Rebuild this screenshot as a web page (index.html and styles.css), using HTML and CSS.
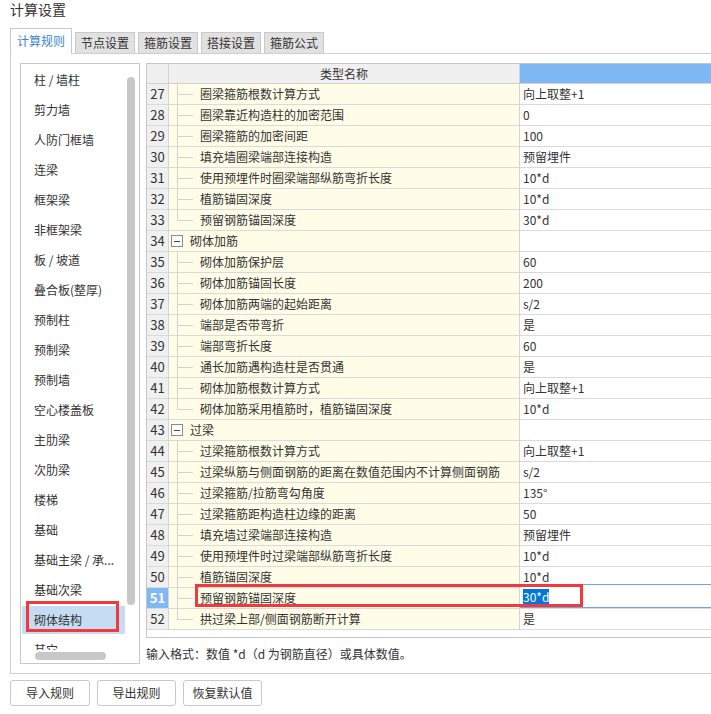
FILE: index.html
```html
<!DOCTYPE html>
<html lang="zh">
<head>
<meta charset="utf-8">
<title>计算设置</title>
<link rel="stylesheet" href="styles.css">
</head>
<body>
<div class="app">
  <div class="title">计算设置</div>
  <div class="tabs">
    <div class="tab active">计算规则</div>
    <div class="tab">节点设置</div>
    <div class="tab">箍筋设置</div>
    <div class="tab">搭接设置</div>
    <div class="tab">箍筋公式</div>
  </div>
  <div class="panel">
    <div class="list-box">
      <div class="list-main">
        <div class="list-items">
          <div class="item">柱 / 墙柱</div>
          <div class="item">剪力墙</div>
          <div class="item">人防门框墙</div>
          <div class="item">连梁</div>
          <div class="item">框架梁</div>
          <div class="item">非框架梁</div>
          <div class="item">板 / 坡道</div>
          <div class="item">叠合板(整厚)</div>
          <div class="item">预制柱</div>
          <div class="item">预制梁</div>
          <div class="item">预制墙</div>
          <div class="item">空心楼盖板</div>
          <div class="item">主肋梁</div>
          <div class="item">次肋梁</div>
          <div class="item">楼梯</div>
          <div class="item">基础</div>
          <div class="item">基础主梁 / 承...</div>
          <div class="item">基础次梁</div>
          <div class="item selected">砌体结构<span class="mark mark-list"></span></div>
          <div class="item">其它</div>
        </div>
        <div class="vscroll"><div class="vthumb"></div></div>
      </div>
      <div class="hscroll"><div class="hthumb"></div></div>
    </div>
    <div class="right">
      <div class="grid">
        <div class="row head">
          <div class="num"></div>
          <div class="name">类型名称</div>
          <div class="val"></div>
        </div>
        <div class="row"><div class="num">27</div><div class="name child">圈梁箍筋根数计算方式</div><div class="val">向上取整+1</div></div>
        <div class="row"><div class="num">28</div><div class="name child">圈梁靠近构造柱的加密范围</div><div class="val">0</div></div>
        <div class="row"><div class="num">29</div><div class="name child">圈梁箍筋的加密间距</div><div class="val">100</div></div>
        <div class="row"><div class="num">30</div><div class="name child">填充墙圈梁端部连接构造</div><div class="val">预留埋件</div></div>
        <div class="row"><div class="num">31</div><div class="name child">使用预埋件时圈梁端部纵筋弯折长度</div><div class="val">10*d</div></div>
        <div class="row"><div class="num">32</div><div class="name child">植筋锚固深度</div><div class="val">10*d</div></div>
        <div class="row"><div class="num">33</div><div class="name child last">预留钢筋锚固深度</div><div class="val">30*d</div></div>
        <div class="row"><div class="num">34</div><div class="name group"><span class="toggle"></span>砌体加筋</div><div class="val"></div></div>
        <div class="row"><div class="num">35</div><div class="name child">砌体加筋保护层</div><div class="val">60</div></div>
        <div class="row"><div class="num">36</div><div class="name child">砌体加筋锚固长度</div><div class="val">200</div></div>
        <div class="row"><div class="num">37</div><div class="name child">砌体加筋两端的起始距离</div><div class="val">s/2</div></div>
        <div class="row"><div class="num">38</div><div class="name child">端部是否带弯折</div><div class="val">是</div></div>
        <div class="row"><div class="num">39</div><div class="name child">端部弯折长度</div><div class="val">60</div></div>
        <div class="row"><div class="num">40</div><div class="name child">通长加筋遇构造柱是否贯通</div><div class="val">是</div></div>
        <div class="row"><div class="num">41</div><div class="name child">砌体加筋根数计算方式</div><div class="val">向上取整+1</div></div>
        <div class="row"><div class="num">42</div><div class="name child last">砌体加筋采用植筋时，植筋锚固深度</div><div class="val">10*d</div></div>
        <div class="row"><div class="num">43</div><div class="name group"><span class="toggle"></span>过梁</div><div class="val"></div></div>
        <div class="row"><div class="num">44</div><div class="name child">过梁箍筋根数计算方式</div><div class="val">向上取整+1</div></div>
        <div class="row"><div class="num">45</div><div class="name child">过梁纵筋与侧面钢筋的距离在数值范围内不计算侧面钢筋</div><div class="val">s/2</div></div>
        <div class="row"><div class="num">46</div><div class="name child">过梁箍筋/拉筋弯勾角度</div><div class="val">135°</div></div>
        <div class="row"><div class="num">47</div><div class="name child">过梁箍筋距构造柱边缘的距离</div><div class="val">50</div></div>
        <div class="row"><div class="num">48</div><div class="name child">填充墙过梁端部连接构造</div><div class="val">预留埋件</div></div>
        <div class="row"><div class="num">49</div><div class="name child">使用预埋件时过梁端部纵筋弯折长度</div><div class="val">10*d</div></div>
        <div class="row"><div class="num">50</div><div class="name child">植筋锚固深度</div><div class="val">10*d</div></div>
        <div class="row sel"><div class="num">51</div><div class="name child">预留钢筋锚固深度</div><div class="val"><div class="editor"><span class="hl">30*d</span></div></div><span class="mark mark-grid"></span></div>
        <div class="row"><div class="num">52</div><div class="name child last">拱过梁上部/侧面钢筋断开计算</div><div class="val">是</div></div>
      </div>
      <div class="hint">输入格式：数值 *d（d 为钢筋直径）或具体数值。</div>
    </div>
  </div>
  <div class="buttons">
    <div class="btn b1">导入规则</div>
    <div class="btn">导出规则</div>
    <div class="btn">恢复默认值</div>
  </div>
</div>
</body>
</html>
```
FILE: styles.css
```css
html, body {
  margin: 0;
  padding: 0;
  background: #fff;
  overflow: hidden;
  width: 711px;
  height: 714px;
}
body {
  font-family: "Noto Sans CJK SC", "Noto Sans", sans-serif;
  font-size: 12px;
  color: #333;
}
.app {
  padding-left: 10px;
  width: 800px;
}
.title {
  font-size: 14px;
  line-height: 18px;
  height: 18px;
}
.tabs {
  display: flex;
  align-items: flex-end;
  gap: 3px;
  margin-top: 10px;
  height: 25px;
}
.tab {
  box-sizing: border-box;
  width: 60px;
  height: 21px;
  border: 1px solid #c9c9c9;
  border-bottom: none;
  background: #e1e1e1;
  text-align: center;
  line-height: 20px;
}
.tab.active {
  width: 62px;
  height: 26px;
  line-height: 24px;
  background: #fff;
  color: #3a85d6;
  margin-bottom: -1px;
  position: relative;
  z-index: 1;
}
.panel {
  display: flex;
  gap: 6px;
  height: 601px;
  padding: 9px 0 9px 9px;
  border: 1px solid #cfcfcf;
  width: 760px;
}
.list-box {
  box-sizing: border-box;
  width: 120px;
  height: 601px;
  border: 1px solid #c9c9c9;
  display: flex;
  flex-direction: column;
  flex: none;
}
.list-main {
  display: flex;
  height: 586px;
}
.list-items {
  width: 104px;
  overflow: hidden;
  padding-top: 2px;
}
.item {
  height: 28px;
  margin: 0 0 2px 1px;
  padding-left: 12px;
  line-height: 28px;
  white-space: nowrap;
}
.item.selected {
  background: #c5dcf2;
  position: relative;
}
.mark {
  position: absolute;
  box-sizing: border-box;
  border: 3px solid #f2393b;
  z-index: 3;
}
.mark-list {
  left: 4px;
  top: -5px;
  width: 93px;
  height: 31px;
}
.vscroll {
  width: 13px;
}
.vthumb {
  margin: 13px 0 0 2px;
  width: 8px;
  height: 528px;
  border-radius: 4px;
  background: #c8c8c8;
}
.hscroll {
  height: 13px;
}
.hthumb {
  margin: 2px 0 0 14px;
  width: 71px;
  height: 8px;
  border-radius: 4px;
  background: #c8c8c8;
}
.right {
  display: flex;
  flex-direction: column;
}
.grid {
  box-sizing: border-box;
  width: 600px;
  height: 578px;
  border: 1px solid #c6c6c6;
  overflow: hidden;
}
.row {
  display: grid;
  grid-template-columns: 22px 351px 1fr;
  height: 21px;
}
.row > div {
  box-sizing: border-box;
  border-bottom: 1px solid #dadada;
  line-height: 20px;
  white-space: nowrap;
  overflow: hidden;
}
.num {
  background: #f0f0f0;
  border-right: 1px solid #d4d4d4;
  text-align: center;
  font-size: 13px;
}
.name {
  background: #fffde8;
  border-right: 1px solid #d4d4d4;
}
.val {
  background: #fff;
  padding-left: 3px;
}
.row.head {
  height: 20px;
}
.row.head > div {
  line-height: 19px;
  border-bottom-color: #d0d0d0;
}
.row.head .name {
  background: #f0f0f0;
  text-align: center;
}
.row.head .val {
  background: #7eb9f6;
}
.name.child {
  padding-left: 31px;
  background:
    linear-gradient(#d2d2d2, #d2d2d2) 8px 0 / 1px 100% no-repeat,
    linear-gradient(#d2d2d2, #d2d2d2) 9px 10px / 15px 1px no-repeat,
    #fffde8;
}
.name.child.last {
  background:
    linear-gradient(#d2d2d2, #d2d2d2) 8px 0 / 1px 11px no-repeat,
    linear-gradient(#d2d2d2, #d2d2d2) 9px 10px / 15px 1px no-repeat,
    #fffde8;
}
.name.group {
  padding-left: 2px;
  display: flex;
  align-items: center;
}
.toggle {
  box-sizing: border-box;
  width: 12px;
  height: 12px;
  border: 1px solid #8a8a8a;
  margin-right: 7px;
  flex: none;
  background: linear-gradient(#444, #444) center / 6px 1px no-repeat, #fff;
}
.row.sel {
  position: relative;
}
.row.sel .num {
  background: #7eb9f6;
  color: #fff;
  font-weight: bold;
}
.row.sel .val {
  overflow: visible;
  position: relative;
  padding-left: 0;
}
.editor {
  position: absolute;
  left: 0;
  right: 0;
  top: -4px;
  height: 24px;
  box-sizing: border-box;
  border: 1px solid #6ea7e3;
  border-left: none;
  background: #fff;
  padding-left: 3px;
  display: flex;
  align-items: center;
  z-index: 1;
}
.hl {
  background: #0078d7;
  color: #fff;
  line-height: 15px;
  height: 15px;
}
.mark-grid {
  left: 48px;
  top: -4px;
  width: 388px;
  height: 23px;
}
.hint {
  margin-top: 6px;
  line-height: 20px;
  white-space: nowrap;
}
.buttons {
  display: flex;
  gap: 7px;
  margin-top: 6px;
}
.btn {
  box-sizing: border-box;
  width: 79px;
  height: 26px;
  border: 1px solid #c9c9c9;
  border-radius: 3px;
  background: #fff;
  text-align: center;
  line-height: 24px;
}
.btn.b1 {
  width: 80px;
}
```
